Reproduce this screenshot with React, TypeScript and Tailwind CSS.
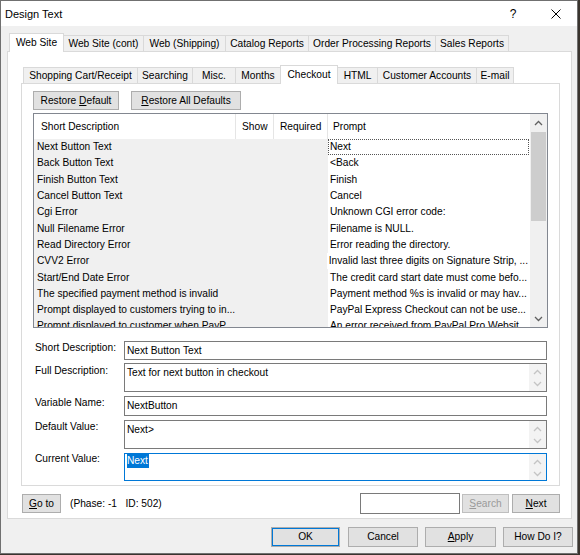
import React from "react";

const outerTabs = [
  { label: "Web Site", w: 55, sel: true },
  { label: "Web Site (cont)", w: 81 },
  { label: "Web (Shipping)", w: 83 },
  { label: "Catalog Reports", w: 84 },
  { label: "Order Processing Reports", w: 128 },
  { label: "Sales Reports", w: 74 },
];

const innerTabs = [
  { label: "Shopping Cart/Receipt", w: 115 },
  { label: "Searching", w: 56 },
  { label: "Misc.", w: 44 },
  { label: "Months", w: 46 },
  { label: "Checkout", w: 58, sel: true },
  { label: "HTML", w: 41 },
  { label: "Customer Accounts", w: 100 },
  { label: "E-mail", w: 38 },
];

const rows: [string, string][] = [
  ["Next Button Text", "Next"],
  ["Back Button Text", "<Back"],
  ["Finish Button Text", "Finish"],
  ["Cancel Button Text", "Cancel"],
  ["Cgi Error", "Unknown CGI error code:"],
  ["Null Filename Error", "Filename is NULL."],
  ["Read Directory Error", "Error reading the directory."],
  ["CVV2 Error", "Invalid last three digits on Signature Strip, ..."],
  ["Start/End Date Error", "The credit card start date must come befo..."],
  ["The specified payment method is invalid", "Payment method %s is invalid or may hav..."],
  ["Prompt displayed to customers trying to in...", "PayPal Express Checkout can not be use..."],
  ["Prompt displayed to customer when PayP...", "An error received from PayPal Pro Websit..."],
];

type Tab = { label: string; w: number; sel?: boolean };

const TabRow = ({ tabs, className = "" }: { tabs: Tab[]; className?: string }) => (
  <div className={`flex items-end h-[18px] ${className}`}>
    {tabs.map((t, i) =>
      t.sel ? (
        <div
          key={t.label}
          style={{ width: t.w }}
          className={`${i ? "-ml-px" : ""} self-start h-[19px] relative z-10 bg-white border border-b-0 border-[#d9d9d9] flex items-center justify-center whitespace-nowrap`}
        >
          {t.label}
        </div>
      ) : (
        <div
          key={t.label}
          style={{ width: t.w }}
          className={`${i ? "-ml-px" : ""} h-[16px] bg-[#f0f0f0] border border-b-0 border-[#d9d9d9] flex items-center justify-center whitespace-nowrap`}
        >
          {t.label}
        </div>
      )
    )}
  </div>
);

const Chevron = ({ up, color = "#606060" }: { up?: boolean; color?: string }) => (
  <svg width="9" height="6" viewBox="0 0 9 6">
    <path d={up ? "M1 5 L4.5 1.5 L8 5" : "M1 1 L4.5 4.5 L8 1"} stroke={color} strokeWidth="1.3" fill="none" />
  </svg>
);

const Btn = ({ children, className = "" }: { children: React.ReactNode; className?: string }) => (
  <div className={`flex items-center justify-center border border-[#adadad] bg-[#e1e1e1] whitespace-nowrap ${className}`}>
    {children}
  </div>
);

const Spin = () => (
  <div className="w-[17px] bg-[#f3f3f3] flex flex-col items-center pt-[5px] gap-[6px]">
    <Chevron up color="#c4c4c4" />
    <Chevron color="#c4c4c4" />
  </div>
);

const Field = ({
  label,
  h,
  mt,
  lpt,
  multi,
  focus,
  children,
}: {
  label: string;
  h: number;
  mt: number;
  lpt: number;
  multi?: boolean;
  focus?: boolean;
  children: React.ReactNode;
}) => (
  <div className="flex" style={{ marginTop: mt }}>
    <div className="w-[91px] pl-[2px] whitespace-nowrap" style={{ paddingTop: lpt }}>
      {label}
    </div>
    <div
      className={`w-[423px] flex bg-white border ${focus ? "border-[#0078d7]" : "border-[#7a7a7a]"} ${multi ? "" : "items-center"}`}
      style={{ height: h }}
    >
      <div className={`flex-1 pl-[2px] ${multi ? (focus ? "pt-[1px]" : "pt-[3px]") : ""}`}>{children}</div>
      {multi && <Spin />}
    </div>
  </div>
);

export default function App() {
  return (
    <div className="w-[580px] h-[555px] bg-[#3a342e] font-['Liberation_Sans',Arial,sans-serif] text-[10.2px] leading-[12px] text-black">
      <div className="w-[578px] h-[554px] border border-[#707070] bg-[#f0f0f0] flex flex-col">
        {/* title bar */}
        <div className="h-[25px] bg-white flex items-center">
          <div className="flex-1 pl-[4px] text-[11px]">Design Text</div>
          <div className="w-[44px] h-full flex items-center justify-center text-[12px]">?</div>
          <div className="w-[42px] h-full flex items-center justify-center">
            <svg width="10" height="10" viewBox="0 0 10 10">
              <path d="M0.5 0.5 L9.5 9.5 M9.5 0.5 L0.5 9.5" stroke="#000" strokeWidth="1" />
            </svg>
          </div>
        </div>

        <div className="pl-[6px] pt-[7px] flex flex-col">
          <TabRow tabs={outerTabs} className="pl-[2px]" />

          {/* outer tab page */}
          <div className="w-[565px] h-[468px] border border-[#dadada] bg-white flex flex-col pt-[13px]">
            <TabRow tabs={innerTabs} className="pl-[15px]" />

            {/* inner tab page */}
            <div className="ml-[13px] w-[539px] h-[403px] border border-[#dadada] bg-white flex flex-col pt-[7px] pl-[11px]">
              <div className="flex h-[19px]">
                <Btn className="w-[86px]">
                  <span>
                    Restore <span className="underline">D</span>efault
                  </span>
                </Btn>
                <Btn className="w-[110px] ml-[12px]">
                  <span>
                    <span className="underline">R</span>estore All Defaults
                  </span>
                </Btn>
              </div>

              {/* list view */}
              <div className="mt-[3px] w-[515px] h-[215px] border border-[#828790] flex overflow-hidden">
                <div className="w-[496px] flex flex-col">
                  <div className="h-[25px] bg-white flex shrink-0">
                    <div className="w-[202px] border-r border-[#e5e5e5] pl-[7px] pt-[7px]">Short Description</div>
                    <div className="w-[38px] border-r border-[#e5e5e5] pl-[6px] pt-[7px]">Show</div>
                    <div className="w-[54px] border-r border-[#e5e5e5] pl-[6px] pt-[7px]">Required</div>
                    <div className="flex-1 pl-[5px] pt-[7px]">Prompt</div>
                  </div>
                  {rows.map(([d, p], i) => (
                    <div key={d} className="h-[16.3px] flex shrink-0">
                      <div className="w-[294px] bg-[#f0f0f0] pl-[3px] flex items-center whitespace-nowrap">{d}</div>
                      <div className="flex-1 bg-white pr-[1px] flex items-stretch">
                        <div
                          className={`flex-1 pl-[1px] flex items-center whitespace-nowrap ${
                            i === 0 ? "border border-dotted border-[#555]" : "border border-transparent"
                          }`}
                        >
                          {p}
                        </div>
                      </div>
                    </div>
                  ))}
                </div>
                {/* scrollbar */}
                <div className="w-[17px] bg-[#f0f0f0] flex flex-col">
                  <div className="h-[17px] flex items-center justify-center">
                    <Chevron up />
                  </div>
                  <div className="h-[89px] mt-[1px] mx-[1px] bg-[#cdcdcd]" />
                  <div className="flex-1" />
                  <div className="h-[17px] flex items-center justify-center">
                    <Chevron />
                  </div>
                </div>
              </div>

              {/* detail fields */}
              <Field label="Short Description:" h={19} mt={13} lpt={1}>
                Next Button Text
              </Field>
              <Field label="Full Description:" h={29} mt={3} lpt={2} multi>
                Text for next button in checkout
              </Field>
              <Field label="Variable Name:" h={20} mt={4} lpt={1}>
                NextButton
              </Field>
              <Field label="Default Value:" h={29} mt={4} lpt={1} multi>
                Next&gt;
              </Field>
              <Field label="Current Value:" h={28} mt={4} lpt={0} multi focus>
                <span className="bg-[#0078d7] text-white py-[2px] pr-[1px]">Next</span>
              </Field>
            </div>

            {/* go to / search row */}
            <div className="mt-[8px] h-[19px] flex items-center pl-[14px] pr-[11px]">
              <Btn className="w-[39px] h-[19px]">
                <span>
                  <span className="underline">G</span>o to
                </span>
              </Btn>
              <div className="ml-[9px] whitespace-nowrap">(Phase: -1&nbsp;&nbsp;&nbsp;ID: 502)</div>
              <div className="ml-auto w-[100px] h-[21px] bg-white border border-[#7a7a7a]" />
              <Btn className="ml-[2px] w-[47px] h-[19px] bg-[#cccccc] border-[#bfbfbf] text-[#9a9a9a]">
                <span>
                  <span className="underline">S</span>earch
                </span>
              </Btn>
              <Btn className="ml-[3px] w-[48px] h-[19px]">
                <span>
                  <span className="underline">N</span>ext
                </span>
              </Btn>
            </div>
          </div>

          {/* dialog buttons */}
          <div className="mt-[8px] h-[20px] flex">
            <Btn className="ml-[264px] w-[69px] border-[#0078d7] shadow-[inset_0_0_0_1px_#0078d7]">OK</Btn>
            <Btn className="ml-[8px] w-[70px]">Cancel</Btn>
            <Btn className="ml-[7px] w-[71px]">
              <span>
                <span className="underline">A</span>pply
              </span>
            </Btn>
            <Btn className="ml-[7px] w-[70px]">How Do I?</Btn>
          </div>
        </div>
      </div>
    </div>
  );
}
